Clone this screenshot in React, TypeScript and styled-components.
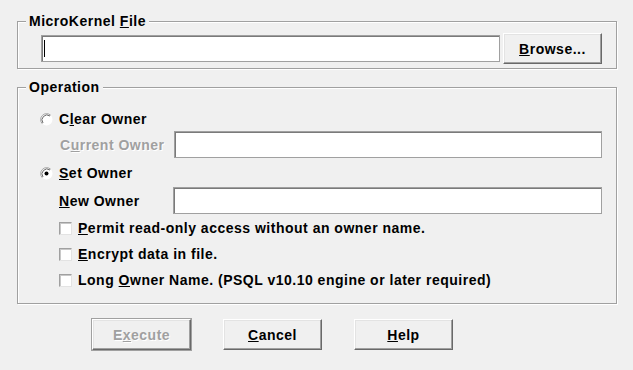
import React from 'react';
import styled, { createGlobalStyle } from 'styled-components';

const GlobalStyle = createGlobalStyle`
  html, body {
    margin: 0;
    background: #f0f0f0;
  }
  body {
    font-family: 'Liberation Sans', Arial, sans-serif;
    font-weight: bold;
    font-size: 14px;
    letter-spacing: 0.5px;
    color: #000;
  }
`;

const Dialog = styled.div`
  width: 633px;
  height: 370px;
  box-sizing: border-box;
  padding: 14px 16px 0 17px;
  display: flex;
  flex-direction: column;
`;

const Group = styled.fieldset<{ $top?: number; $pad: string }>`
  margin: ${(p) => p.$top ?? 0}px 0 0;
  padding: ${(p) => p.$pad};
  min-width: 0;
  border: 1px solid #a0a0a0;
  box-shadow: 1px 1px 0 #fff, inset 1px 1px 0 #fff;
`;

const Legend = styled.legend`
  margin-left: 0;
  padding: 0 3px;
  line-height: 14px;
  background: #f0f0f0;
`;

const Key = styled.span`
  text-decoration: underline;
  text-underline-offset: 1px;
`;

const Row = styled.div<{ $top?: number; $h: number; $indent?: number }>`
  display: flex;
  align-items: center;
  height: ${(p) => p.$h}px;
  margin-top: ${(p) => p.$top ?? 0}px;
  padding-left: ${(p) => p.$indent ?? 0}px;
`;

const Field = styled.div`
  flex: 1;
  height: 27px;
  box-sizing: border-box;
  background: #fff;
  border: 1px solid #a0a0a0;
  box-shadow: inset 1px 1px 0 #7a7a7a;
  display: flex;
  align-items: center;
  padding-left: 2px;
`;

const Caret = styled.span`
  width: 1px;
  height: 17px;
  background: #000;
`;

const FieldLabel = styled.span<{ $disabled?: boolean }>`
  width: 114px;
  flex: none;
  color: ${(p) => (p.$disabled ? '#a0a0a0' : '#000')};
  text-shadow: ${(p) => (p.$disabled ? '1px 1px 0 #fff' : 'none')};
`;

const Button = styled.div<{ $disabled?: boolean; $width?: number }>`
  width: ${(p) => p.$width ?? 99}px;
  height: 31px;
  box-sizing: border-box;
  flex: none;
  display: flex;
  align-items: center;
  justify-content: center;
  background: #f0f0f0;
  border: 1px solid;
  border-color: #fff #696969 #696969 #fff;
  box-shadow: inset -1px -1px 0 #a0a0a0, inset 1px 1px 0 #e3e3e3;
  color: ${(p) => (p.$disabled ? '#a0a0a0' : '#000')};
  text-shadow: ${(p) => (p.$disabled ? '1px 1px 0 #fff' : 'none')};
  outline: ${(p) => (p.$disabled ? '1px solid #a0a0a0' : 'none')};
`;

const Choice = styled.span`
  display: flex;
  align-items: center;
  gap: 6px;
`;

const CheckBox = styled.span`
  width: 13px;
  height: 13px;
  box-sizing: border-box;
  flex: none;
  background: #fff;
  border: 1px solid;
  border-color: #a0a0a0 #e3e3e3 #e3e3e3 #a0a0a0;
  box-shadow: inset 1px 1px 0 #c8c8c8;
`;

const ButtonBar = styled.div`
  display: flex;
  gap: 32px;
  margin-top: 15px;
  padding-left: 75px;
`;

function Radio({ checked }: { checked?: boolean }) {
  return (
    <svg width="13" height="13" viewBox="0 0 13 13" style={{ flex: 'none', display: 'block' }}>
      <circle cx="6.5" cy="6.5" r="6" fill="#fff" />
      <path d="M2.26 10.74 A6 6 0 0 1 10.74 2.26" fill="none" stroke="#a0a0a0" strokeWidth="1" />
      <path d="M3 10 A5 5 0 0 1 10 3" fill="none" stroke="#696969" strokeWidth="1" />
      {checked && <circle cx="6.5" cy="6.5" r="2" fill="#000" />}
    </svg>
  );
}

export default function App() {
  return (
    <>
      <GlobalStyle />
      <Dialog>
        <Group $pad="5px 14px 4px 8px">
          <Legend>
            MicroKernel <Key>F</Key>ile
          </Legend>
          <Row $h={31} $indent={15}>
            <Field>
              <Caret />
            </Field>
            <Button $width={99} style={{ marginLeft: 3 }}>
              <span>
                <Key>B</Key>rowse...
              </span>
            </Button>
          </Row>
        </Group>

        <Group $top={11} $pad="18px 14px 10px 8px">
          <Legend>Operation</Legend>
          <Row $h={14} $indent={14}>
            <Choice>
              <Radio />
              <span>
                C<Key>l</Key>ear Owner
              </span>
            </Choice>
          </Row>
          <Row $h={27} $top={5} $indent={34}>
            <FieldLabel $disabled>
              C<Key>u</Key>rrent Owner
            </FieldLabel>
            <Field />
          </Row>
          <Row $h={14} $top={8} $indent={14}>
            <Choice>
              <Radio checked />
              <span>
                <Key>S</Key>et Owner
              </span>
            </Choice>
          </Row>
          <Row $h={27} $top={7} $indent={33}>
            <FieldLabel>
              <Key>N</Key>ew Owner
            </FieldLabel>
            <Field />
          </Row>
          <Row $h={26} $top={1} $indent={33}>
            <Choice>
              <CheckBox />
              <span>
                <Key>P</Key>ermit read-only access without an owner name.
              </span>
            </Choice>
          </Row>
          <Row $h={26} $indent={33}>
            <Choice>
              <CheckBox />
              <span>
                <Key>E</Key>ncrypt data in file.
              </span>
            </Choice>
          </Row>
          <Row $h={26} $indent={33}>
            <Choice>
              <CheckBox />
              <span>
                Long <Key>O</Key>wner Name. (PSQL v10.10 engine or later required)
              </span>
            </Choice>
          </Row>
        </Group>

        <ButtonBar>
          <Button $disabled>
            <span>
              E<Key>x</Key>ecute
            </span>
          </Button>
          <Button>
            <span>
              <Key>C</Key>ancel
            </span>
          </Button>
          <Button>
            <span>
              <Key>H</Key>elp
            </span>
          </Button>
        </ButtonBar>
      </Dialog>
    </>
  );
}
